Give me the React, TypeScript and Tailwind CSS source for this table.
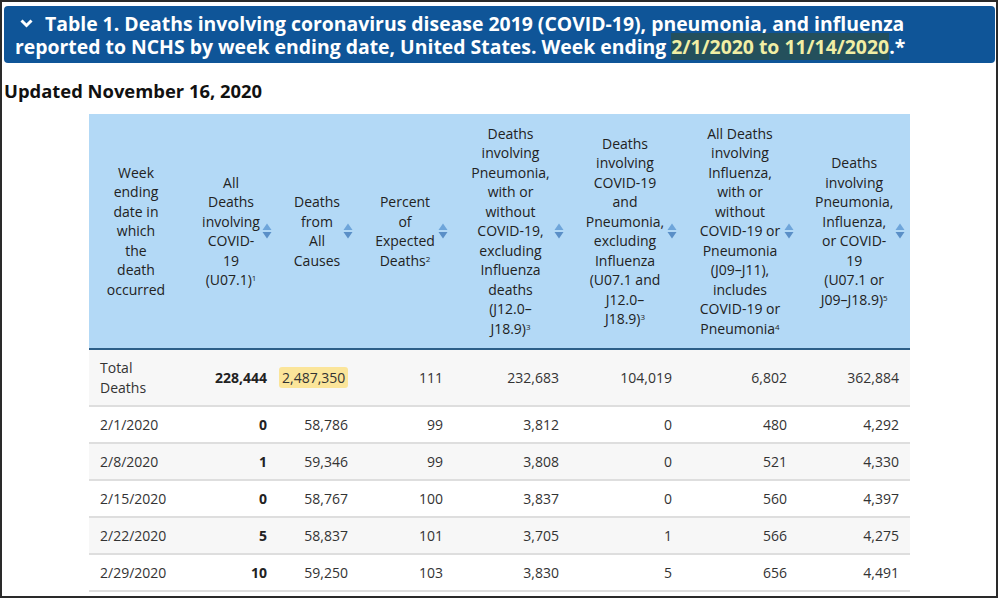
import React from 'react'

const FONT = { fontFamily: '"Open Sans", "Noto Sans", Arial, sans-serif' }

const COLS = 'grid grid-cols-[99px_91px_81px_95px_116px_113px_117px_109px]'

type Head = { lines: React.ReactNode[]; sort?: boolean }

const S = ({ n }: { n: string }) => <sup className="text-[8px]">{n}</sup>

const HEADS: Head[] = [
  { lines: ['Week', 'ending', 'date in', 'which', 'the', 'death', 'occurred'] },
  { lines: ['All', 'Deaths', 'involving', 'COVID-', '19', <>(U07.1)<S n="1" /></>], sort: true },
  { lines: ['Deaths', 'from', 'All', 'Causes'], sort: true },
  { lines: ['Percent', 'of', 'Expected', <>Deaths<S n="2" /></>], sort: true },
  {
    lines: ['Deaths', 'involving', 'Pneumonia,', 'with or', 'without', 'COVID-19,', 'excluding', 'Influenza', 'deaths', '(J12.0–', <>J18.9)<S n="3" /></>],
    sort: true,
  },
  {
    lines: ['Deaths', 'involving', 'COVID-19', 'and', 'Pneumonia,', 'excluding', 'Influenza', '(U07.1 and', 'J12.0–', <>J18.9)<S n="3" /></>],
    sort: true,
  },
  {
    lines: ['All Deaths', 'involving', 'Influenza,', 'with or', 'without', 'COVID-19 or', 'Pneumonia', '(J09–J11),', 'includes', 'COVID-19 or', <>Pneumonia<S n="4" /></>],
    sort: true,
  },
  {
    lines: ['Deaths', 'involving', 'Pneumonia,', 'Influenza,', 'or COVID-', '19', '(U07.1 or', <>J09–J18.9)<S n="5" /></>],
    sort: true,
  },
]

const ROWS = [
  ['2/1/2020', '0', '58,786', '99', '3,812', '0', '480', '4,292'],
  ['2/8/2020', '1', '59,346', '99', '3,808', '0', '521', '4,330'],
  ['2/15/2020', '0', '58,767', '100', '3,837', '0', '560', '4,397'],
  ['2/22/2020', '5', '58,837', '101', '3,705', '1', '566', '4,275'],
  ['2/29/2020', '10', '59,250', '103', '3,830', '5', '656', '4,491'],
]

function SortIcon({ hidden }: { hidden?: boolean }) {
  return (
    <svg width="10" height="16" viewBox="0 0 10 16" className={hidden ? 'invisible ml-[2px] shrink-0' : 'ml-[2px] shrink-0'}>
      <path d="M0.5 7 L5 0.5 L9.5 7 Z" fill="#6ea5da" />
      <path d="M0.5 9 L9.5 9 L5 15.5 Z" fill="#5a8fc7" />
    </svg>
  )
}

export default function App() {
  return (
    <div style={FONT} className="h-[598px] w-[998px] overflow-hidden border-2 border-[#2a2a2a] bg-white">
      {/* title bar */}
      <div className="ml-[2px] mr-[1px] mt-[4px] whitespace-nowrap rounded-[4px] bg-[#0f5598] pb-[5px] pl-[11px] pt-[6px] text-[19.4px] font-bold leading-[23px] text-white">
        <svg width="13" height="9" viewBox="0 0 13 9" className="mb-[4px] ml-[5px] mr-[12px] inline-block">
          <polyline points="1.5,1.5 6.5,6.5 11.5,1.5" fill="none" stroke="white" strokeWidth="3" />
        </svg>
        Table 1. Deaths involving coronavirus disease 2019 (COVID-19), pneumonia, and influenza
        <br />
        reported to NCHS by week ending date, United States. Week ending{' '}
        <span className="bg-[#24505c] text-[#f1eea4]">2/1/2020 to 11/14/2020</span>.*
      </div>

      <div className="mt-[16px] pl-[2px] text-[18.4px] font-bold leading-[24px] text-[#111]">Updated November 16, 2020</div>

      {/* table */}
      <div className="ml-[87px] mt-[11px] w-[821px] text-[14px] text-[#333]">
        <div className={`${COLS} h-[236px] border-b-2 border-[#2d5f88] bg-[#b3d9f6] text-[#222]`}>
          {HEADS.map((h, i) => (
            <div key={i} className="flex items-center pl-[14px] pr-[7px]">
              <div className="flex-1 whitespace-nowrap text-center leading-[19.5px]">
                {h.lines.map((l, j) => (
                  <div key={j}>{l}</div>
                ))}
              </div>
              <SortIcon hidden={!h.sort} />
            </div>
          ))}
        </div>

        <div className={`${COLS} h-[57px] items-center border-b-2 border-[#dedede] bg-[#f7f7f7]`}>
          <div className="pl-[11px] leading-[20px]">
            Total
            <br />
            Deaths
          </div>
          <div className="pr-[12px] text-right font-bold text-[#222]">228,444</div>
          <div className="pr-[12px] text-right">
            <span className="rounded-[3px] bg-[#fbe59a] px-[3px] py-[1px]">2,487,350</span>
          </div>
          <div className="pr-[12px] text-right">111</div>
          <div className="pr-[12px] text-right">232,683</div>
          <div className="pr-[12px] text-right">104,019</div>
          <div className="pr-[14px] text-right">6,802</div>
          <div className="pr-[11px] text-right">362,884</div>
        </div>

        {ROWS.map((r, i) => (
          <div
            key={r[0]}
            className={`${COLS} h-[37px] items-center border-b-2 border-[#dedede] ${i % 2 === 1 ? 'bg-[#f7f7f7]' : 'bg-white'}`}
          >
            <div className="pl-[11px]">{r[0]}</div>
            <div className="pr-[12px] text-right font-bold text-[#222]">{r[1]}</div>
            <div className="pr-[12px] text-right">{r[2]}</div>
            <div className="pr-[12px] text-right">{r[3]}</div>
            <div className="pr-[12px] text-right">{r[4]}</div>
            <div className="pr-[12px] text-right">{r[5]}</div>
            <div className="pr-[14px] text-right">{r[6]}</div>
            <div className="pr-[11px] text-right">{r[7]}</div>
          </div>
        ))}
      </div>
    </div>
  )
}
